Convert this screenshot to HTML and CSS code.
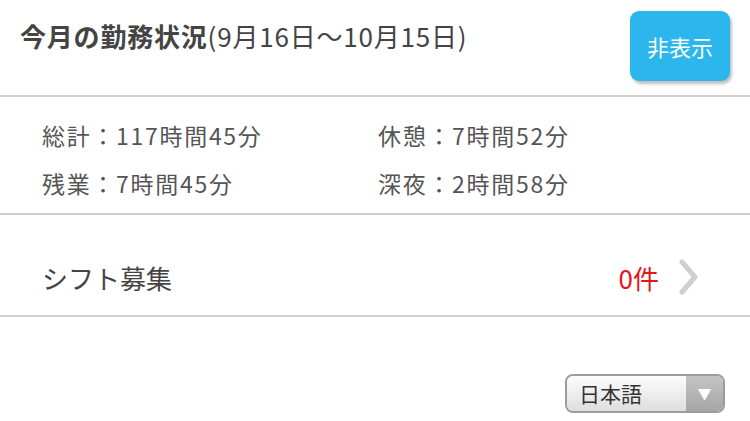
FILE: index.html
```html
<!DOCTYPE html>
<html lang="ja">
<head>
  <meta charset="UTF-8">
  <title>勤務状況</title>
  <link rel="stylesheet" href="styles.css">
</head>
<body>
  <div class="summary-head">
    <h2><b>今月の勤務状況</b>(9月16日～10月15日)</h2>
    <button class="toggle-btn">非表示</button>
  </div>

  <div class="summary-body">
    <div>総計：117時間45分</div>
    <div>休憩：7時間52分</div>
    <div>残業：7時間45分</div>
    <div>深夜：2時間58分</div>
  </div>

  <div class="menu-row">
    <span class="menu-label">シフト募集</span>
    <span class="menu-count">0件</span>
    <svg class="chevron" width="22" height="36" viewBox="0 0 22 36">
      <polyline points="4,3 17,18 4,33" fill="none" stroke="#cfcfcf" stroke-width="5" stroke-linecap="round" stroke-linejoin="round"/>
    </svg>
  </div>

  <div class="lang-wrap">
    <div class="lang-select">
      <span class="lang-text">日本語</span>
      <span class="lang-arrow">▼</span>
    </div>
  </div>
</body>
</html>
```

FILE: styles.css
```css
body { margin: 0; background: #fff; color: #444; font-family: "Noto Sans CJK JP", "Liberation Sans", sans-serif; }

.summary-head { display: flex; align-items: center; justify-content: space-between; height: 97px; padding: 0 20px; border-bottom: 2px solid #cfcfcf; box-sizing: border-box; }
.summary-head h2 { margin: 0 0 24px 0; font-size: 26px; font-weight: normal; letter-spacing: 0.8px; color: #444; }
.summary-head h2 b { font-weight: bold; }
.toggle-btn { width: 100px; height: 70px; margin-bottom: 4px; border: none; border-radius: 9px; background: #2bb6ec; color: #fff; font-family: inherit; font-size: 22px; box-shadow: 2px 3px 3px rgba(0, 0, 0, 0.25); }

.summary-body { display: grid; grid-template-columns: 336px 1fr; grid-auto-rows: 48px; align-items: center; padding: 14px 0 6px 42px; border-bottom: 2px solid #cfcfcf; font-size: 23px; letter-spacing: 1.7px; color: #555; }

.menu-row { display: flex; align-items: center; height: 102px; padding: 24px 50px 0 42px; box-sizing: border-box; border-bottom: 2px solid #cfcfcf; }
.menu-label { flex: 1; font-size: 26px; color: #444; }
.menu-count { font-size: 26px; color: #e8141b; margin-right: 19px; }
.chevron { filter: blur(0.6px); }

.lang-wrap { display: flex; justify-content: flex-end; padding: 57px 25px 0 0; }
.lang-select { display: flex; width: 160px; height: 39px; box-sizing: border-box; border: 2px solid #9c9c9c; border-radius: 8px; overflow: hidden; }
.lang-text { flex: 1; padding-left: 12px; font-size: 21px; line-height: 35px; color: #333; background: linear-gradient(#fdfdfd, #dedede); }
.lang-arrow { width: 37px; text-align: center; font-size: 14px; line-height: 35px; color: #fff; background: linear-gradient(#c4c4c4, #a6a6a6); }
```
